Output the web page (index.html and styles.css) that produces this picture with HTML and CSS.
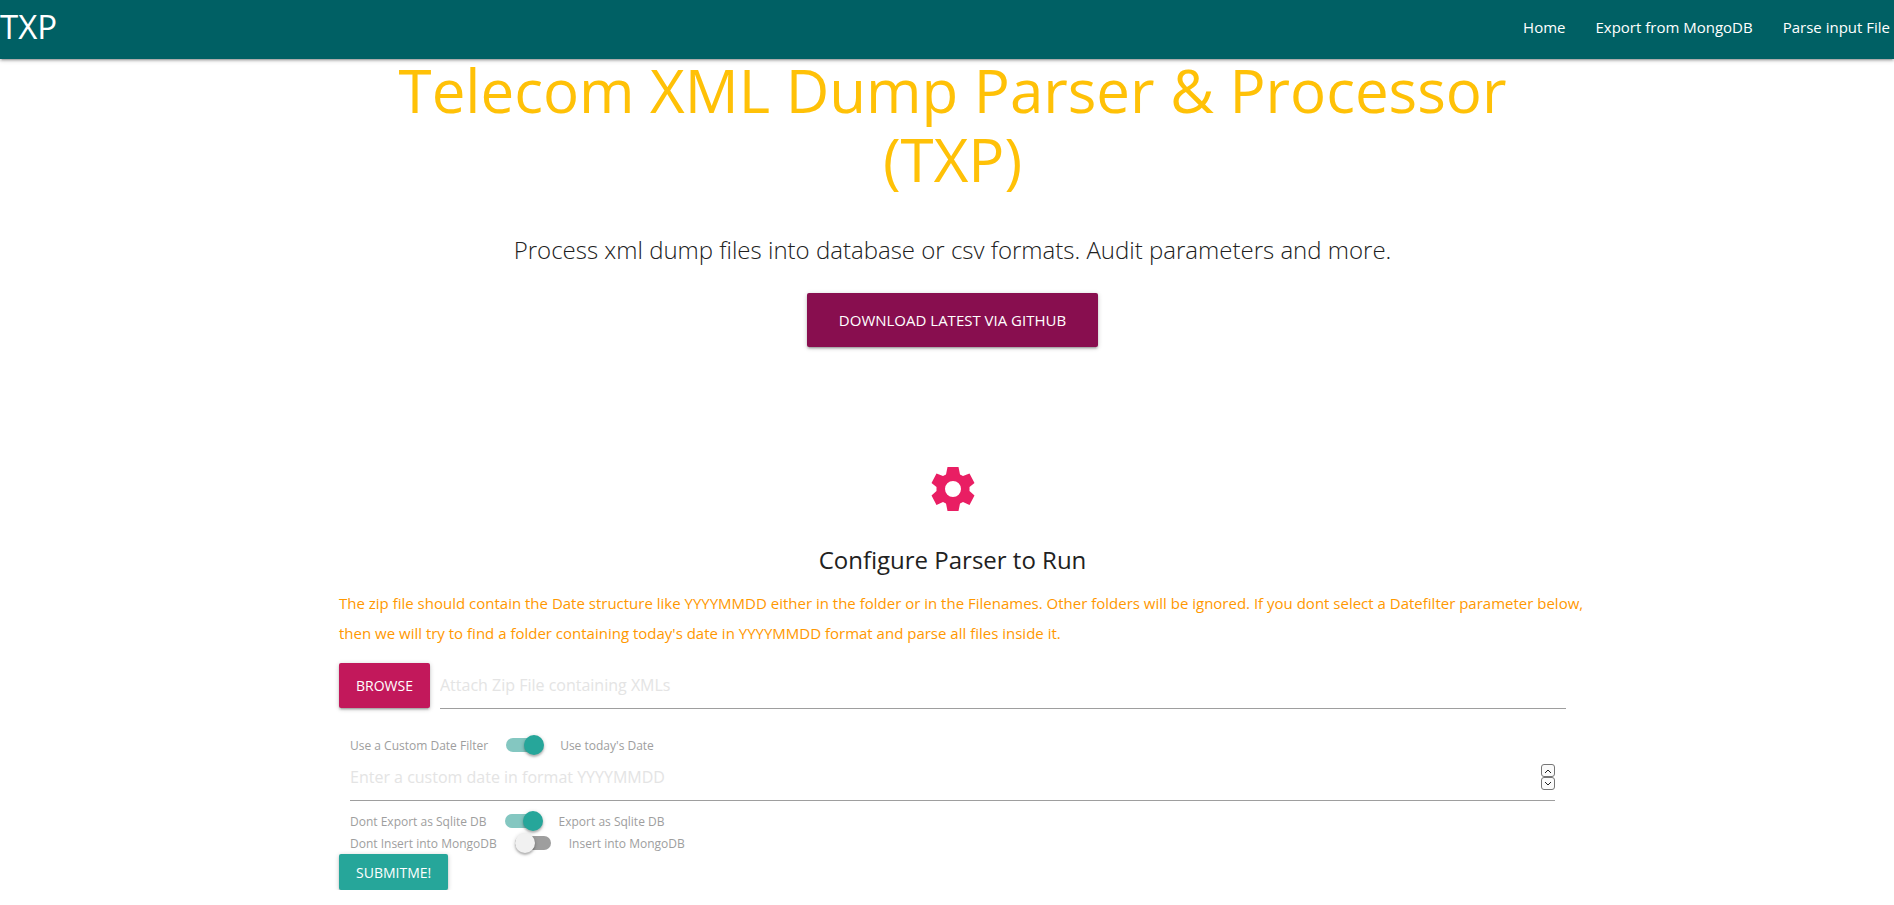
FILE: index.html
```html
<!DOCTYPE html>
<html lang="en">
<head>
<meta charset="utf-8">
<meta name="viewport" content="width=device-width, initial-scale=1">
<title>TXP</title>
<link rel="stylesheet" href="styles.css">
</head>
<body>
<nav class="navbar">
  <a class="brand" href="#">TXP</a>
  <div class="nav-links">
    <a href="#">Home</a>
    <a href="#">Export from MongoDB</a>
    <a href="#">Parse input File</a>
  </div>
</nav>
<main class="page">
  <div class="container">
  <header class="hero">
    <h1>Telecom XML Dump Parser &amp; Processor (TXP)</h1>
    <p class="tagline">Process xml dump files into database or csv formats. Audit parameters and more.</p>
    <a class="btn btn-large" href="#">DOWNLOAD LATEST VIA GITHUB</a>
  </header>
  <section class="config">
    <svg class="gear" viewBox="0 0 44 44" aria-hidden="true"><path fill-rule="evenodd" d="M16.500 0h11l1.500 7.500 3 1.500 6.500-2.500 5 9.500-5 4v4l5 4.500-5 9.500-6.500-3-3 1.500-1.500 7.500h-11l-1.500-7.500-3-1.500-6.500 3-5-9.500 5-4.500v-4l-5-4 5-9.500 6.500 2.500 3-1.500zM22 14a8 8 0 1 0 0 16 8 8 0 0 0 0-16z"/></svg>
    <h2>Configure Parser to Run</h2>
    <p class="notice">The zip file should contain the Date structure like YYYYMMDD either in the folder or in the Filenames. Other folders will be ignored. If you dont select a Datefilter parameter below, then we will try to find a folder containing today's date in YYYYMMDD format and parse all files inside it.</p>
    <form class="form">
      <div class="file-row">
        <button class="btn btn-browse" type="button">BROWSE</button>
        <input class="field" type="text" aria-label="Zip file" placeholder="Attach Zip File containing XMLs">
      </div>
      <div class="options">
        <label class="switch">Use a Custom Date Filter <input type="checkbox" checked> Use today's Date</label>
        <div class="date-row">
          <input class="field" type="text" inputmode="numeric" aria-label="Custom date" placeholder="Enter a custom date in format YYYYMMDD">
          <div class="spinner">
            <button type="button" aria-label="Increase"><svg viewBox="0 0 6 4"><path d="M0 4l3-3 3 3"/></svg></button>
            <button type="button" aria-label="Decrease"><svg viewBox="0 0 6 4"><path d="M0 0l3 3 3-3"/></svg></button>
          </div>
        </div>
        <label class="switch">Dont Export as Sqlite DB <input type="checkbox" checked> Export as Sqlite DB</label>
        <label class="switch">Dont Insert into MongoDB <input type="checkbox"> Insert into MongoDB</label>
      </div>
      <button class="btn btn-submit" type="submit">SUBMITME!</button>
    </form>
  </section>
  </div>
</main>
</body>
</html>
```
FILE: styles.css
```css
* { box-sizing: border-box; }
body {
  margin: 0;
  background: #fff;
  color: #212121;
  font-family: "Open Sans", "Noto Sans", sans-serif;
  font-size: 15px;
}
a { color: inherit; text-decoration: none; }
.navbar {
  display: flex;
  justify-content: space-between;
  padding-right: 4px;
  line-height: 54px;
  height: 59px;
  background: #006064;
  color: #fff;
  box-shadow: 0 2px 2px rgba(0, 0, 0, .14), 0 3px 1px -2px rgba(0, 0, 0, .12), 0 1px 5px rgba(0, 0, 0, .2);
}
.brand { font-size: 33px; }
.nav-links { display: flex; gap: 30px; font-size: 15px; }
.page { padding-left: 11px; }
.container {
  width: 90%;
  max-width: 1227px;
  margin: 0 auto;
}
.hero { text-align: center; }
h1 {
  margin: -3px 0 34px;
  color: #ffc107;
  font-size: 60px;
  font-weight: 400;
  line-height: 69px;
}
.tagline { margin: 0 0 22px; font-size: 24px; font-weight: 300; line-height: 43px; }
.btn {
  display: inline-flex;
  align-items: center;
  justify-content: center;
  border: 0;
  border-radius: 2px;
  padding: 0 17px;
  color: #fff;
  font: inherit;
  font-size: 14px;
  box-shadow: 0 2px 2px rgba(0, 0, 0, .14), 0 3px 1px -2px rgba(0, 0, 0, .12), 0 1px 5px rgba(0, 0, 0, .2);
}
.btn-large { height: 54px; padding: 0 32px; background: #880e4f; font-size: 15px; }
.btn-browse { height: 45px; background: #c2185b; }
.btn-submit { height: 36px; background: #26a69a; }
.config { padding-top: 120px; }
.gear { display: block; width: 44px; height: 44px; margin: 0 auto 31px; fill: #e91e63; }
h2 { margin: 0 0 10px; text-align: center; font-size: 24px; font-weight: 400; line-height: 36px; }
.notice { margin: 0 -24px 15px 0; color: #ff9800; line-height: 30px; }
.file-row { display: flex; gap: 10px; }
.field {
  flex: 1;
  min-width: 0;
  height: 46px;
  padding: 0 0 2px;
  border: 0;
  border-bottom: 1px solid #9e9e9e;
  outline: 0;
  background: transparent;
  font: inherit;
  font-size: 16px;
}
.field::placeholder { color: #e4e4e4; opacity: 1; }
.options { padding: 25px 11px 0; }
.switch {
  display: flex;
  align-items: center;
  gap: 18px;
  height: 22px;
  color: #9e9e9e;
  font-size: 12px;
}
.switch input {
  appearance: none;
  position: relative;
  width: 36px;
  height: 14px;
  margin: 0;
  border-radius: 8px;
  background: #9e9e9e;
}
.switch input::before {
  content: "";
  position: absolute;
  top: -3px;
  left: 0;
  width: 20px;
  height: 20px;
  border-radius: 50%;
  background: #f1f1f1;
  box-shadow: 0 2px 2px rgba(0, 0, 0, .2), 0 1px 4px rgba(0, 0, 0, .2);
}
.switch input:checked { background: #84c7c1; }
.switch input:checked::before { left: 18px; background: #26a69a; }
.date-row { display: flex; border-bottom: 1px solid #9e9e9e; margin-bottom: 9px; }
.date-row .field { border: 0; height: 44px; }
.spinner { display: flex; flex-direction: column; padding-top: 8px; }
.spinner button {
  display: flex;
  align-items: center;
  justify-content: center;
  width: 14px;
  height: 13px;
  padding: 0;
  border: 1px solid #767676;
  border-radius: 3px;
  background: #fafafa;
}
.spinner svg { width: 6px; height: 4px; fill: none; stroke: #222; }
```
